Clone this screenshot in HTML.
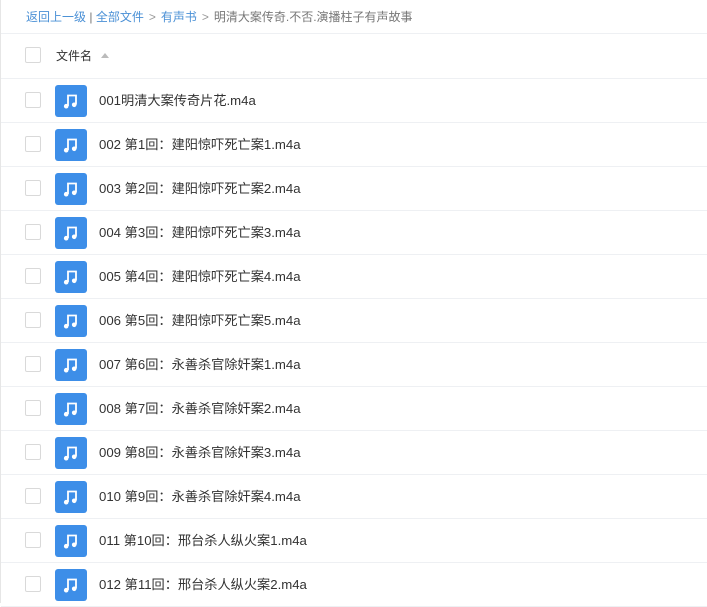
<!DOCTYPE html>
<html><head><meta charset="utf-8"><style>
body{margin:0;width:707px;height:603px;overflow:hidden;background:#fff;font-family:"Liberation Sans","Noto Sans CJK SC",sans-serif;position:relative}
.lb{position:absolute;left:0;top:0;width:1px;height:603px;background:#e6e6e6}
.bc{position:absolute;left:26px;top:8px;font-size:12px;color:#777;line-height:18px}
.bc a{color:#4a90d6;text-decoration:none}
.bc .g{color:#999;margin:0 5px}
.hl{position:absolute;left:1px;right:0;height:1px;background:#eef0f3}
.cb{position:absolute;left:25px;width:14px;height:14px;border:1px solid #d9d9d9;border-radius:2px;background:#fff}
.hd{position:absolute;left:56px;top:47px;font-size:12px;color:#333}
.tri{position:absolute;left:101px;top:53px;width:0;height:0;border-left:4px solid transparent;border-right:4px solid transparent;border-bottom:5px solid #bbb}
.ic{position:absolute;left:55px;width:32px;height:32px;border-radius:3px;background:#3d8ee8}
.ic svg{position:absolute;left:7px;top:7px}
.nm{position:absolute;left:99px;font-size:13.2px;color:#333;line-height:18px}
</style></head><body>
<div class="lb"></div>
<div class="bc"><a>返回上一级</a> | <a>全部文件</a><span class="g">&gt;</span><a>有声书</a><span class="g">&gt;</span>明清大案传奇.不否.演播柱子有声故事</div>
<div class="hl" style="top:33px"></div>
<div class="cb" style="top:47px"></div>
<div class="hd">文件名</div><div class="tri"></div>
<div class="hl" style="top:78px"></div>
<div id="rows"></div>
<script>
var n=["001明清大案传奇片花.m4a","002 第1回：建阳惊吓死亡案1.m4a","003 第2回：建阳惊吓死亡案2.m4a","004 第3回：建阳惊吓死亡案3.m4a","005 第4回：建阳惊吓死亡案4.m4a","006 第5回：建阳惊吓死亡案5.m4a","007 第6回：永善杀官除奸案1.m4a","008 第7回：永善杀官除奸案2.m4a","009 第8回：永善杀官除奸案3.m4a","010 第9回：永善杀官除奸案4.m4a","011 第10回：邢台杀人纵火案1.m4a","012 第11回：邢台杀人纵火案2.m4a"];
var h="";
for(var i=0;i<n.length;i++){var c=100+44*i;
h+='<div class="cb" style="top:'+(c-8)+'px"></div><div class="ic" style="top:'+(c-15)+'px"><svg width="18" height="18" viewBox="0 0 18 18"><path d="M6 14V3.5h8V12.5" fill="none" stroke="#fff" stroke-width="1.8"/><circle cx="4.2" cy="14.2" r="2.3" fill="#fff"/><circle cx="12.2" cy="12.8" r="2.3" fill="#fff"/></svg></div><div class="nm" style="top:'+(c-8)+'px">'+n[i]+'</div><div class="hl" style="top:'+(c+22)+'px"></div>';}
document.getElementById("rows").innerHTML=h;
</script>
</body></html>
